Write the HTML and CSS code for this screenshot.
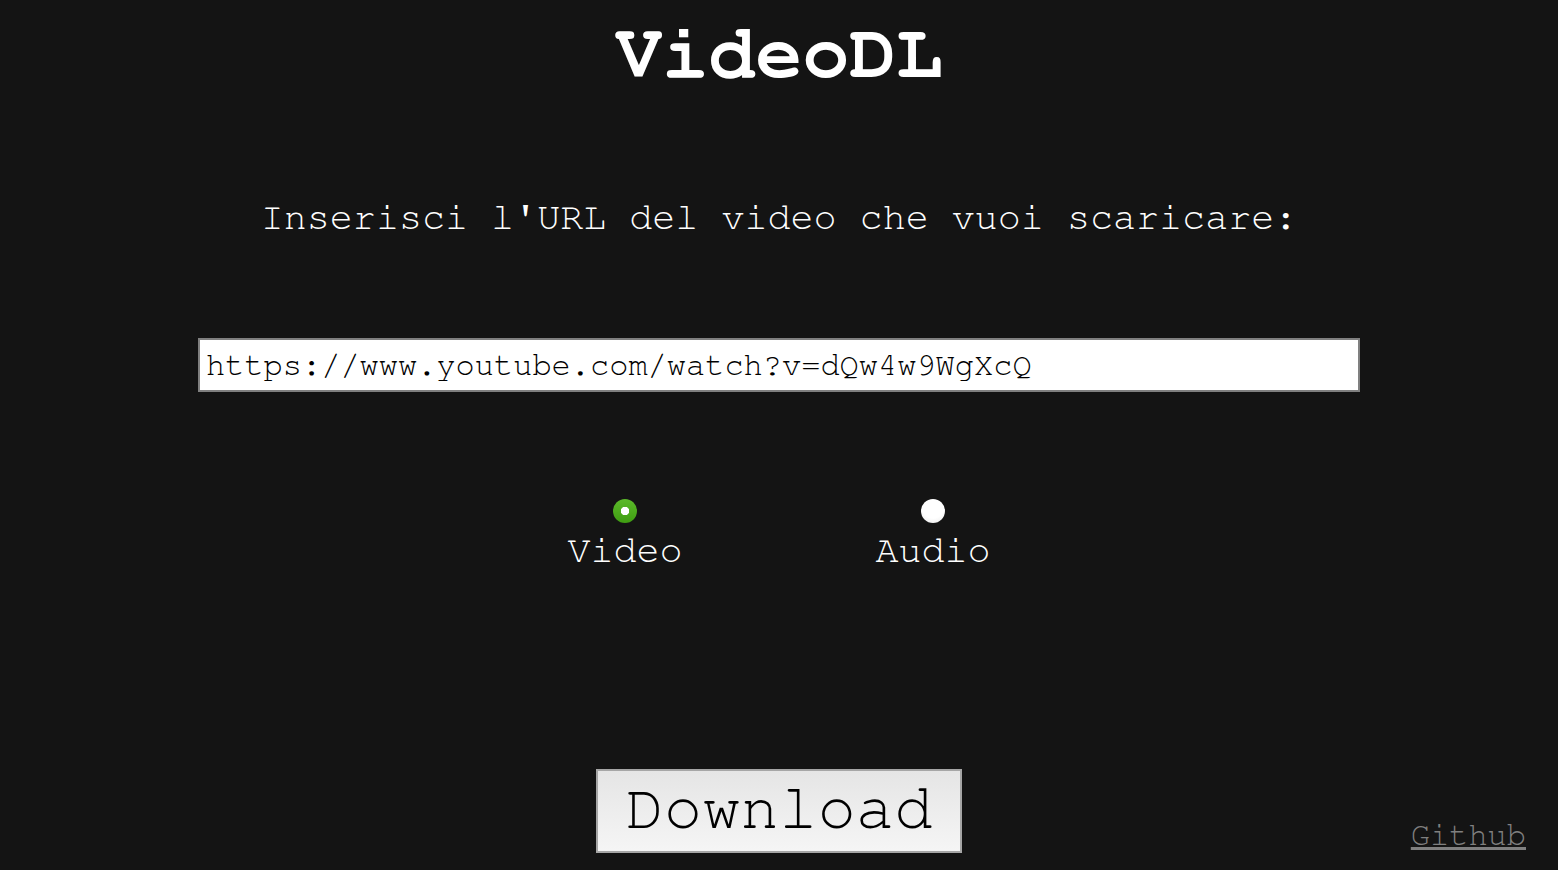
FILE: index.html
```html
<!DOCTYPE html>
<html lang="it">
<head>
<meta charset="utf-8">
<title>VideoDL</title>
<link rel="stylesheet" href="styles.css">
</head>
<body>
<main class="page">
  <h1 class="title">VideoDL</h1>
  <p class="prompt">Inserisci l'URL del video che vuoi scaricare:</p>
  <input class="url" type="text" value="https://www.youtube.com/watch?v=dQw4w9WgXcQ">
  <div class="options">
    <label class="option">
      <input class="radio" type="radio" name="kind" value="video" checked>
      <span class="option-label">Video</span>
    </label>
    <label class="option">
      <input class="radio" type="radio" name="kind" value="audio">
      <span class="option-label">Audio</span>
    </label>
  </div>
  <div class="bottom">
    <span></span>
    <button class="download" type="button">Download</button>
    <a class="github" href="#">Github</a>
  </div>
</main>
</body>
</html>
```
FILE: styles.css
```css
html, body {
  margin: 0;
  padding: 0;
  background: #141414;
}
body {
  font-family: "Nimbus Mono PS", "FreeMono", "Courier New", "Liberation Mono", monospace;
  color: #ffffff;
}
.page {
  display: flex;
  flex-direction: column;
  align-items: center;
  height: 870px;
  box-sizing: border-box;
  padding-top: 15px;
}
.title {
  margin: 0;
  font-size: 78px;
  line-height: 1;
  font-weight: bold;
}
.prompt {
  margin: 106px 0 0;
  font-size: 38.4px;
  line-height: 1;
}
.url {
  margin-top: 101px;
  width: 1162px;
  height: 54px;
  box-sizing: border-box;
  border: 2px solid #808080;
  padding: 0 6px;
  background: #ffffff;
  color: #000000;
  font-family: inherit;
  font-size: 32px;
  outline: none;
}
.options {
  margin-top: 107px;
  display: flex;
  gap: 190px;
}
.option {
  width: 118px;
  display: flex;
  flex-direction: column;
  align-items: center;
}
.radio {
  appearance: none;
  -webkit-appearance: none;
  margin: 0;
  width: 24px;
  height: 24px;
  border-radius: 50%;
  background: radial-gradient(circle at 50% 35%, #ffffff 55%, #e6e6e6 100%);
}
.radio:checked {
  background:
    radial-gradient(circle, #ffffff 0 4px, transparent 4.5px),
    linear-gradient(#5cba2a, #3f9d12);
}
.option-label {
  margin-top: 9px;
  font-size: 38.4px;
  line-height: 1;
}
.bottom {
  margin-top: 198px;
  width: 100%;
  box-sizing: border-box;
  padding: 0 32px;
  display: grid;
  grid-template-columns: 1fr auto 1fr;
  align-items: end;
}
.download {
  width: 366px;
  height: 84px;
  box-sizing: border-box;
  border: 2px solid #a6a6a6;
  background: linear-gradient(#e5e5e5, #f5f5f5);
  color: #000000;
  font-family: inherit;
  font-size: 64px;
  line-height: 1;
  padding: 0 0 4px;
}
.github {
  justify-self: end;
  margin-bottom: 2px;
  color: #808080;
  font-size: 32px;
  line-height: 1;
  text-decoration: underline;
}
```
